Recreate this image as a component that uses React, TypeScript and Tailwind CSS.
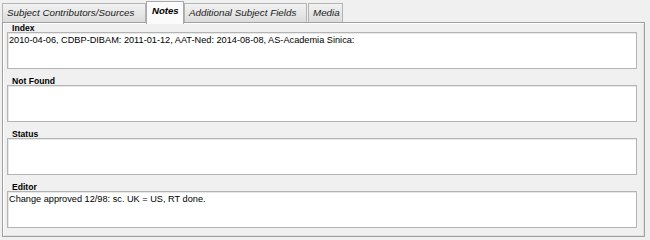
import React from "react";

const sections = [
  { label: "Index", text: "2010-04-06, CDBP-DIBAM: 2011-01-12, AAT-Ned: 2014-08-08, AS-Academia Sinica:" },
  { label: "Not Found", text: "" },
  { label: "Status", text: "" },
  { label: "Editor", text: "Change approved 12/98: sc. UK = US, RT done." },
];

export default function App() {
  const tabBase =
    "h-[19px] border border-b-0 border-[#b4b4b4] bg-gradient-to-b from-[#f2f2f2] to-[#dcdcdc] pl-[4px] pt-[3px] text-[9.8px] italic leading-[12px] text-[#1a1a1a]";
  return (
    <div className="h-[240px] w-[650px] overflow-hidden bg-[#f0f0f0] font-['Liberation_Sans',Arial,sans-serif]">
      <div className="flex h-[22px] items-end pl-[2px]">
        <div className={`${tabBase} w-[144px]`}>Subject Contributors/Sources</div>
        <div className="relative z-10 -mb-[2px] h-[23px] w-[38px] border border-b-0 border-[#a9a9a9] bg-[#fbfbfb] pl-[5px] pt-[3px] text-[9.6px] font-bold italic leading-[12px] text-black">
          Notes
        </div>
        <div className={`${tabBase} w-[123px]`}>Additional Subject Fields</div>
        <div className={`${tabBase} ml-[1px] w-[35px]`}>Media</div>
      </div>
      <div className="ml-[2px] h-[215px] w-[643px] border border-[#a0a0a0] shadow-[inset_1px_1px_0_#ffffff,inset_-1px_-1px_0_#e0e0e0]">
        <div className="flex flex-col gap-[8px] pb-[6px] pl-[4px] pr-[7px] pt-[1px]">
          {sections.map((s) => (
            <div key={s.label} className="flex flex-col">
              <div className="h-[8px] pl-[5px] text-[8.6px] font-bold leading-[9px] text-black">
                {s.label}
              </div>
              <div className="h-[37px] border border-[#b4b4b4] bg-white pl-[1px] pt-[2px] text-[9.2px] leading-[11px] text-black shadow-[inset_1px_1px_0_#e8e8e8]">
                {s.text}
              </div>
            </div>
          ))}
        </div>
      </div>
    </div>
  );
}
